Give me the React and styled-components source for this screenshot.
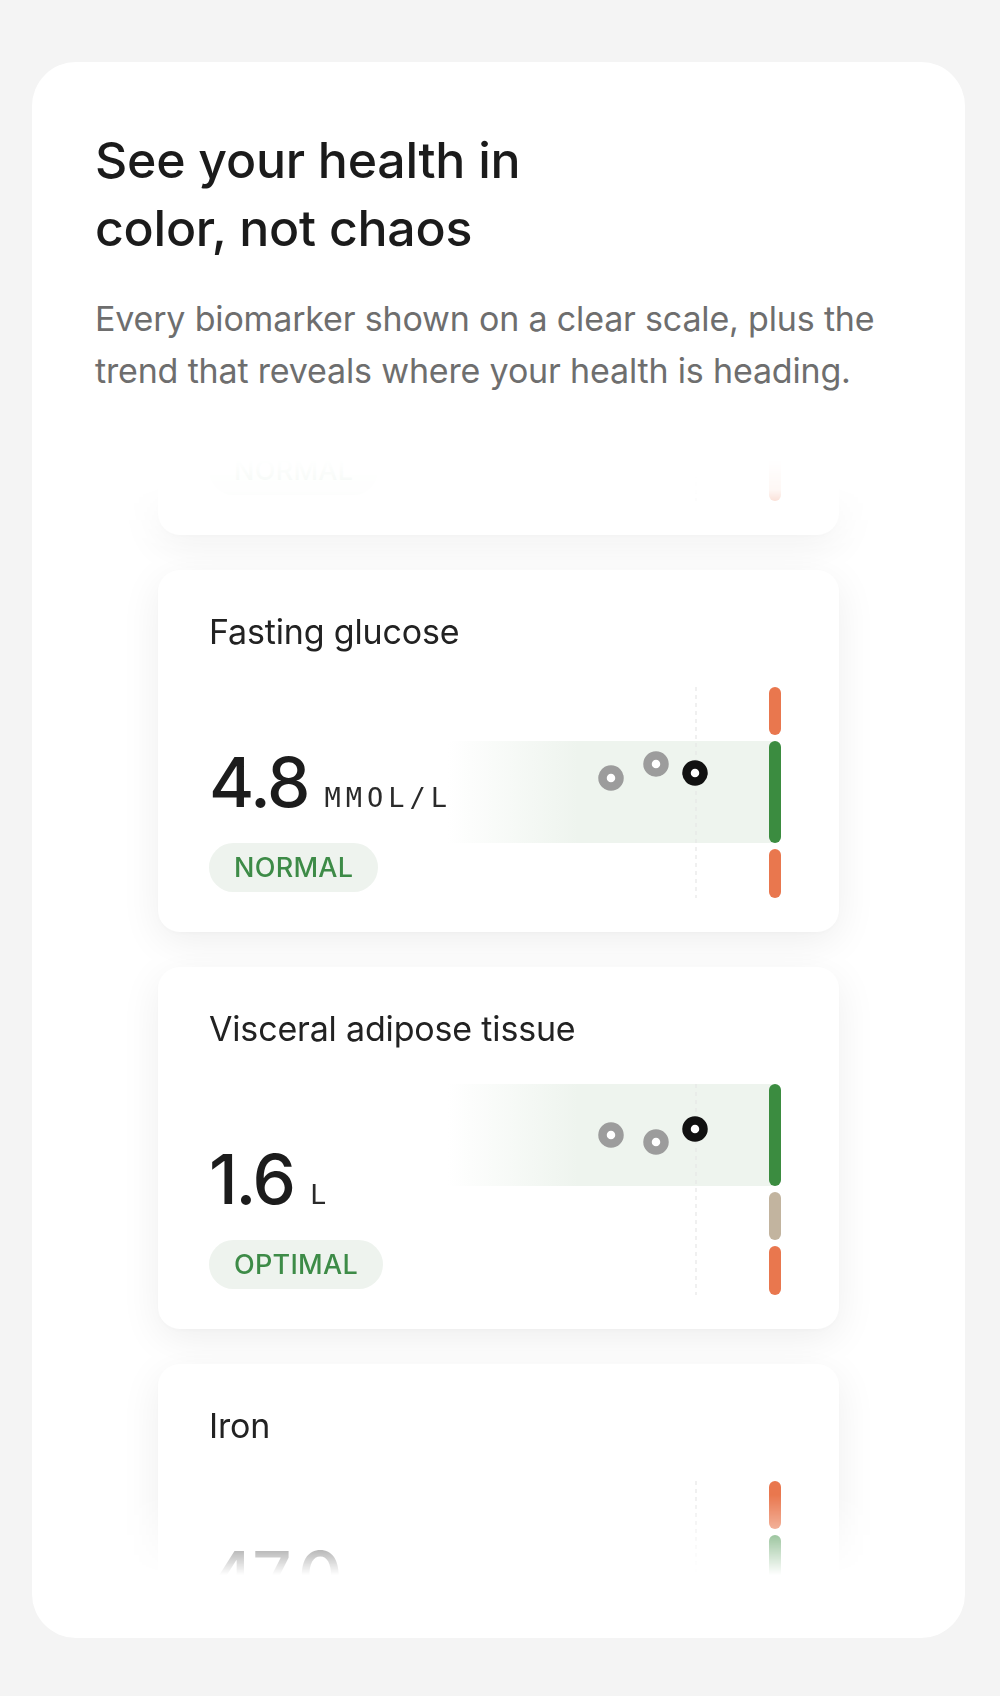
import React from 'react'
import styled, { createGlobalStyle } from 'styled-components'

const COLORS = {
    orange: '#e9774e',
    green: '#3b8c40',
    tan: '#c2b49f',
}

const markers = [
    {
        title: 'Apolipoprotein B',
        value: '0.8',
        unit: 'G/L',
        status: 'NORMAL',
        segments: [['orange', 48], ['green', 102], ['orange', 49]],
        band: true,
        rings: [[163, 96], [208, 84], [247, 90]],
    },
    {
        title: 'Fasting glucose',
        value: '4.8',
        unit: 'MMOL/L',
        status: 'NORMAL',
        segments: [['orange', 48], ['green', 102], ['orange', 49]],
        band: true,
        rings: [[163, 91], [208, 77], [247, 86]],
    },
    {
        title: 'Visceral adipose tissue',
        value: '1.6',
        unit: 'L',
        status: 'OPTIMAL',
        segments: [['green', 102], ['tan', 48], ['orange', 49]],
        band: true,
        rings: [[163, 51], [208, 58], [247, 45]],
    },
    {
        title: 'Iron',
        value: '47.0',
        unit: 'µMOL/L',
        status: 'LOW',
        segments: [['orange', 48], ['green', 102], ['orange', 49]],
        band: false,
        rings: [[163, 176], [208, 184], [247, 190]],
    },
]

const GAP = 6

const Chart = ({ segments, rings, band }) => {
    let y = 0
    const parts = segments.map(([color, h]) => {
        const part = { color, y, h }
        y += h + GAP
        return part
    })
    const range = band ? parts.find(p => p.color === 'green') : null

    return (
        <ChartBox width="340" height="211" viewBox="0 0 340 211">
            <defs>
                <linearGradient id="band-fade" x1="0" x2="1" y1="0" y2="0">
                    <stop offset="0" stopColor="#eef4ee" stopOpacity="0" />
                    <stop offset="0.4" stopColor="#eef4ee" stopOpacity="1" />
                    <stop offset="1" stopColor="#eef4ee" stopOpacity="1" />
                </linearGradient>
            </defs>
            {range && <rect x="0" y={range.y} width="324" height={range.h} fill="url(#band-fade)" />}
            <line x1="248" x2="248" y1="0" y2="211" stroke="#e6e6e6" strokeWidth="1.2" strokeDasharray="4 4" />
            {parts.map((p, i) => (
                <rect key={i} x="321" y={p.y} width="12" height={p.h} rx="6" fill={COLORS[p.color]} />
            ))}
            {rings.map(([cx, cy], i) => (
                <circle
                    key={i}
                    cx={cx}
                    cy={cy}
                    r="8.5"
                    fill="#fff"
                    stroke={i === rings.length - 1 ? '#111' : '#9c9c9c'}
                    strokeWidth="8.5"
                />
            ))}
        </ChartBox>
    )
}

const MarkerCard = ({ marker }) => {
    return (
        <Card>
            <CardTitle>{marker.title}</CardTitle>
            <CardBody>
                <Reading>
                    <ValueRow>
                        <Value>{marker.value}</Value>
                        <Unit>{marker.unit}</Unit>
                    </ValueRow>
                    <Status>{marker.status}</Status>
                </Reading>
                <Chart segments={marker.segments} rings={marker.rings} band={marker.band} />
            </CardBody>
        </Card>
    )
}

const App = () => {
    return (
        <Page>
            <GlobalStyle />
            <Panel>
                <Heading>See your health in color, not chaos</Heading>
                <Lead>Every biomarker shown on a clear scale, plus the trend that reveals where your health is heading.</Lead>
                <Viewport>
                    <CardList>
                        {markers.map(m => (
                            <MarkerCard key={m.title} marker={m} />
                        ))}
                    </CardList>
                </Viewport>
            </Panel>
        </Page>
    )
}

const GlobalStyle = createGlobalStyle`
    html, body {
        margin: 0;
        padding: 0;
        background: #f4f4f4;
    }
    body {
        font-family: Inter, "Noto Sans", "Liberation Sans", sans-serif;
        -webkit-font-smoothing: antialiased;
    }
`

const Page = styled.div`
    width: 1000px;
    padding: 62px 35px 58px 32px;
    box-sizing: border-box;
`

const Panel = styled.section`
    background: #fff;
    border-radius: 44px;
    padding: 64px 63px 63px;
`

const Heading = styled.h2`
    margin: 0;
    max-width: 500px;
    font-size: 50px;
    line-height: 68px;
    font-weight: 500;
    letter-spacing: -0.005em;
    color: #1b1b1b;
`

const Lead = styled.p`
    margin: 31px 0 0;
    font-size: 34px;
    line-height: 52px;
    font-weight: 400;
    letter-spacing: -0.005em;
    color: #6e6e6e;
`

const Viewport = styled.div`
    margin-top: 63px;
    height: 1115px;
    padding: 0 63px;
    overflow: hidden;
    -webkit-mask-image: linear-gradient(to bottom, transparent 0, rgba(0, 0, 0, 0.06) 30px, #000 95px, #000 calc(100% - 80px), transparent 100%);
    mask-image: linear-gradient(to bottom, transparent 0, rgba(0, 0, 0, 0.06) 30px, #000 95px, #000 calc(100% - 80px), transparent 100%);
`

const CardList = styled.div`
    display: flex;
    flex-direction: column;
    gap: 35px;
    margin-top: -287px;
`

const Card = styled.div`
    background: #fff;
    border-radius: 22px;
    padding: 42px 51px 34px;
    box-shadow: 0 10px 40px rgba(0, 0, 0, 0.07), 0 2px 6px rgba(0, 0, 0, 0.025);
`

const CardTitle = styled.div`
    font-size: 34px;
    line-height: 40px;
    letter-spacing: -0.005em;
    color: #222;
    margin-bottom: 35px;
`

const CardBody = styled.div`
    display: flex;
    height: 211px;
`

const Reading = styled.div`
    flex: 1;
    min-width: 0;
    display: flex;
    flex-direction: column;
    justify-content: flex-end;
    align-items: flex-start;
    padding-bottom: 6px;
`

const ValueRow = styled.div`
    display: flex;
    align-items: baseline;
    gap: 16px;
    margin-bottom: 26px;
    white-space: nowrap;
`

const Value = styled.span`
    font-size: 69px;
    line-height: 1;
    font-weight: 500;
    letter-spacing: -0.03em;
    color: #1c1c1c;
`

const Unit = styled.span`
    font-family: "DejaVu Sans Mono", "Liberation Mono", monospace;
    font-size: 27px;
    line-height: 1;
    letter-spacing: 5px;
    color: #2a2a2a;
`

const Status = styled.span`
    display: inline-flex;
    align-items: center;
    height: 49px;
    padding: 0 25px;
    border-radius: 25px;
    background: #eef3ee;
    color: #3d8b47;
    font-size: 27px;
    font-weight: 500;
    letter-spacing: 0.01em;
`

const ChartBox = styled.svg`
    flex-shrink: 0;
    display: block;
    overflow: visible;
`

export default App
